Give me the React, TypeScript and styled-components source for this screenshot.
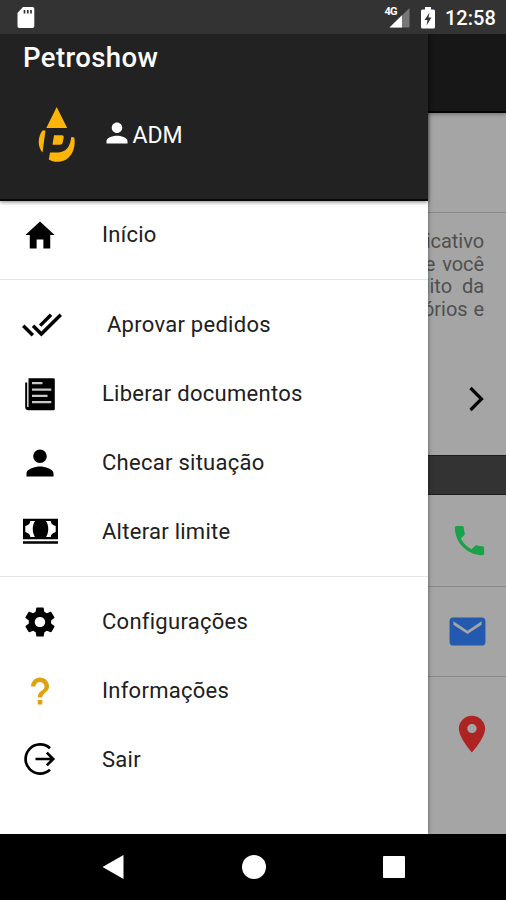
import React from "react";
import styled, { createGlobalStyle } from "styled-components";
import {
  IoMdHome, IoMdDoneAll, IoMdPerson,
  IoMdSettings, IoMdHelp, IoMdCall, IoMdMail, IoMdPin,
} from "react-icons/io";

const GlobalStyle = createGlobalStyle`
  * { box-sizing: border-box; }
  body { margin: 0; background: #000; font-family: Roboto, "Liberation Sans", sans-serif; }
  svg { display: block; flex: none; }
`;

const Phone = styled.div`
  width: 506px;
  height: 900px;
  display: flex;
  flex-direction: column;
  overflow: hidden;
`;

const StatusBar = styled.header`
  height: 34px;
  flex: none;
  display: flex;
  align-items: center;
  padding: 1px 11px 0 17px;
  background: #333;
  color: #fff;
`;

const StatusIcons = styled.div`
  margin-left: auto;
  display: flex;
  align-items: center;
`;

const Clock = styled.span`
  width: 50px;
  margin-left: 10px;
  font-size: 20px;
  font-weight: 500;
  line-height: 34px;
  white-space: nowrap;
`;

const Screen = styled.div`
  position: relative;
  height: 799.5px;
  flex: none;
  overflow: hidden;
`;

const Page = styled.main`
  height: 100%;
  display: flex;
  flex-direction: column;
  background: #a5a5a5;
`;

const AppBar = styled.div`
  height: 79px;
  flex: none;
  background: #171717;
  border-bottom: 2px solid #050505;
  box-shadow: 0 1px 4px rgba(0, 0, 0, 0.35);
`;

const Banner = styled.div`
  height: 100px;
  flex: none;
  border-bottom: 1px solid #8a8a8a;
`;

const Intro = styled.section`
  height: 242px;
  flex: none;
  display: flex;
  flex-direction: column;
  align-items: flex-end;
  padding: 17px 22px 0 0;
`;

const IntroLine = styled.div<{ $gap: number }>`
  font-size: 20px;
  line-height: 22.5px;
  letter-spacing: -0.05px;
  word-spacing: ${(p) => p.$gap}px;
  color: #505050;
  white-space: nowrap;
`;

const Chevron = styled.svg`
  margin-top: 66px;
`;

const Band = styled.div`
  height: 40px;
  flex: none;
  background: #333;
  border-top: 1px solid #1c1c1c;
  border-bottom: 1px solid #1c1c1c;
`;

const ContactRow = styled.div<{ $height: number; $color: string; $right: number; $last?: boolean }>`
  height: ${(p) => p.$height}px;
  flex: none;
  display: flex;
  align-items: center;
  justify-content: flex-end;
  padding-right: ${(p) => p.$right}px;
  color: ${(p) => p.$color};
  border-bottom: ${(p) => (p.$last ? "none" : "1px solid #8a8a8a")};
`;

const Drawer = styled.aside`
  position: absolute;
  inset: 0 auto 0 0;
  width: 428px;
  background: #fff;
  box-shadow: 0 0 4px rgba(0, 0, 0, 0.5);
`;

const DrawerHeader = styled.div`
  height: 167px;
  padding: 7px 24px 0 23px;
  background: #222;
  border-bottom: 2px solid #080808;
  box-shadow: 0 1px 4px rgba(0, 0, 0, 0.5);
  color: #fff;
`;

const Title = styled.h1`
  margin: 0;
  font-size: 27.5px;
  line-height: 33px;
  font-weight: 500;
  letter-spacing: 0.4px;
`;

const Profile = styled.div`
  display: flex;
  align-items: center;
  margin-top: 32px;
  padding-left: 14px;
`;

const User = styled.div`
  display: flex;
  align-items: center;
  margin-left: 25px;
  font-size: 23px;
  line-height: 28px;

  & > svg { margin-bottom: 3px; }
`;

const UserName = styled.span`
  margin: 3px 0 0 1.5px;
`;

const Section = styled.nav<{ $first?: boolean }>`
  padding: ${(p) => (p.$first ? "0" : "10.5px")} 0 ${(p) => (p.$first ? "10px" : "9.5px")};
  & + & { border-top: 1px solid #e4e4e4; }
`;

const MenuItem = styled.a<{ $accent?: boolean }>`
  height: 69px;
  display: flex;
  align-items: center;
  padding-left: 22px;
  color: ${(p) => (p.$accent ? "#dca20f" : "#000")};

  ${Section}:first-of-type > & { height: 68px; }
`;

const IconSlot = styled.span<{ $width?: number }>`
  width: ${(p) => p.$width ?? 80}px;
  flex: none;
`;

const Label = styled.span`
  font-size: 22px;
  line-height: 28px;
  letter-spacing: 0.27px;
  color: #202020;
  white-space: nowrap;
`;

const NavBar = styled.footer`
  flex: 1;
  display: flex;
  justify-content: space-between;
  align-items: center;
  padding: 0 101px 0 102px;
  background: #000;
`;

const SdCard = () => (
  <svg width="18" height="22" viewBox="0 0 18 22">
    <path d="M6 0h9.5A1.8 1.8 0 0 1 17.300 1.800v17.400A1.800 1.800 0 0 1 15.500 21H2.300A1.800 1.800 0 0 1 .5 19.200V6z" fill="#fff" />
    <path d="M7.500 3v3.500M10.800 3v3.500M14 3v3.500" stroke="#333" strokeWidth="1.700" />
  </svg>
);

const SignalText = styled.span`
  font-size: 11px;
  line-height: 10px;
  font-weight: 700;
  letter-spacing: -0.6px;
  align-self: flex-start;
  margin-top: 0;
`;

const Signal = () => (
  <svg width="21" height="21" viewBox="0 0 21 21">
    <path d="M20.500 1v19.500H.5z" fill="#777" />
    <path d="M13 8.300v12.200H.5z" fill="#fff" />
  </svg>
);

const SignalGroup = styled.div`
  display: flex;
  margin-right: 11px;
  & > svg { margin-left: -8px; }
`;

const Battery = () => (
  <svg width="14" height="22" viewBox="0 0 14 22">
    <path d="M4 0h6v2.500h2.500A1.500 1.500 0 0 1 14 4v16a1.500 1.500 0 0 1-1.500 1.500h-11A1.500 1.500 0 0 1 0 20V4a1.500 1.500 0 0 1 1.500-1.500H4z" fill="#fff" />
    <path d="M8.500 5.500L3.500 13h3l-1 5.500 5-8h-3z" fill="#333" />
  </svg>
);

const Logo = () => (
  <svg width="41" height="56" viewBox="0 0 41 56">
    <g fill="#fdb509">
      <path d="M19.700 1L30.200 22H9.300z" />
      <path d="M8.500 24.500L5.500 46.500C.5 41 .4 31 5.500 24.500z" />
      <path d="M17 29.300H25q2 0 1.700 2l-.9 5q-.5 2.500-3 2.500H15.500z" />
      <path d="M13 46.500H21.500c7-.5 11.500-5 12.800-15.500L37.300 31.500C39.500 45 32 55.800 20.500 55.800c-3.500 0-6.200-.8-8.700-2.300z" />
    </g>
  </svg>
);

const Documents = () => (
  <svg width="36" height="36" viewBox="0 0 36 36">
    <path d="M6.500 2.300h25q1.300 0 1.300 1.300v29.300q0 1.300-1.300 1.300H6.500q-3.300 0-3.300-3.300V6.500h2v24.500h1.300z" fill="currentColor" />
    <path d="M10 7.200H20.500M10 13.600H29.300M10 19.800H25.500M10 26.200H29.300" stroke="#c8c8c8" strokeWidth="2.300" />
  </svg>
);

const Banknotes = () => (
  <svg width="36" height="36" viewBox="0 0 36 36">
    <path d="M1 4.800h35v20.400H1zM1 27.300h35v2.400H1z" fill="currentColor" />
    <path d="M8.300 7H13C10 11.500 10 18.500 13 23H8.300Q8.300 19.500 3.300 18V12Q8.300 10.500 8.300 7zM28.700 7H24C27 11.500 27 18.500 24 23h4.700q0-3.500 5-5V12q-5-1.500-5-5z" fill="#fff" />
  </svg>
);

const LogOut = () => (
  <svg width="36" height="36" viewBox="0 0 36 36" fill="none" stroke="currentColor" strokeWidth="2.700">
    <path d="M28 6.200A14.600 14.600 0 1 0 28 27.800" />
    <path d="M13.500 17H31M24.800 10.600L31.200 17l-6.400 6.400" />
  </svg>
);

const sections = [
  [{ label: "Início", icon: <IoMdHome size={36} /> }],
  [
    { label: "Aprovar pedidos", icon: <IoMdDoneAll size={40} />, slot: 85 },
    { label: "Liberar documentos", icon: <Documents /> },
    { label: "Checar situação", icon: <IoMdPerson size={36} /> },
    { label: "Alterar limite", icon: <Banknotes /> },
  ],
  [
    { label: "Configurações", icon: <IoMdSettings size={36} /> },
    { label: "Informações", icon: <IoMdHelp size={36} />, accent: true },
    { label: "Sair", icon: <LogOut /> },
  ],
] as { label: string; icon: React.ReactNode; slot?: number; accent?: boolean }[][];

const introLines: [string, number][] = [
  ["aplicativo", 0],
  ["que você", 2],
  ["crédito da", 5],
  ["relatórios e", 1],
];

export default function App() {
  return (
    <Phone>
      <GlobalStyle />
      <StatusBar>
        <SdCard />
        <StatusIcons>
          <SignalGroup>
            <SignalText>4G</SignalText>
            <Signal />
          </SignalGroup>
          <Battery />
          <Clock>12:58</Clock>
        </StatusIcons>
      </StatusBar>
      <Screen>
        <Page>
          <AppBar />
          <Banner />
          <Intro>
            {introLines.map(([text, gap]) => (
              <IntroLine key={text} $gap={gap}>{text}</IntroLine>
            ))}
            <Chevron width="15" height="26" viewBox="0 0 15 26" fill="none" stroke="#000" strokeWidth="3.200">
              <path d="M1.500 2L12.500 13 1.500 24" />
            </Chevron>
          </Intro>
          <Band />
          <ContactRow $height={91.5} $color="#19a24a" $right={17}><IoMdCall size={39} /></ContactRow>
          <ContactRow $height={90} $color="#2459b0" $right={18}><IoMdMail size={41} /></ContactRow>
          <ContactRow $height={115} $color="#ae2422" $right={13} $last><IoMdPin size={42} /></ContactRow>
        </Page>
        <Drawer>
          <DrawerHeader>
            <Title>Petroshow</Title>
            <Profile>
              <Logo />
              <User>
                <IoMdPerson size={28} />
                <UserName>ADM</UserName>
              </User>
            </Profile>
          </DrawerHeader>
          {sections.map((items, i) => (
            <Section key={i} $first={i === 0}>
              {items.map((item) => (
                <MenuItem key={item.label} $accent={item.accent}>
                  <IconSlot $width={item.slot}>{item.icon}</IconSlot>
                  <Label>{item.label}</Label>
                </MenuItem>
              ))}
            </Section>
          ))}
        </Drawer>
      </Screen>
      <NavBar>
        <svg width="22" height="26" viewBox="0 0 22 26"><path d="M21.500 1v24L.5 13z" fill="#fff" /></svg>
        <svg width="24" height="24" viewBox="0 0 24 24"><circle cx="12" cy="12" r="12" fill="#fff" /></svg>
        <svg width="22" height="22" viewBox="0 0 22 22"><rect width="22" height="22" rx="1" fill="#fff" /></svg>
      </NavBar>
    </Phone>
  );
}
